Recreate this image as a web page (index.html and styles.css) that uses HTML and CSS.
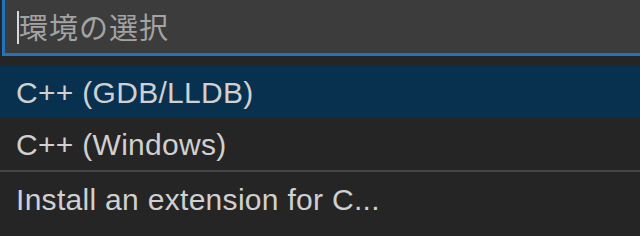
FILE: index.html
```html
<!DOCTYPE html>
<html lang="ja">
<head>
    <meta charset="UTF-8">
    <title>環境の選択</title>
    <link rel="stylesheet" href="styles.css">
</head>
<body>
    <div class="picker">
        <!-- 入力欄 -->
        <div class="input-wrap">
            <div class="input">
                <span class="caret"></span>
                <span class="placeholder">環境の選択</span>
            </div>
        </div>

        <!-- 候補リスト -->
        <ul class="list">
            <li class="item selected">C++ (GDB/LLDB)</li>
            <li class="item">C++ (Windows)</li>
            <li class="item separated">Install an extension for C...</li>
        </ul>
    </div>
</body>
</html>
```

FILE: styles.css
```css
body {
    margin: 0;
    background-color: #252526;
    font-family: "Liberation Sans", Arial, sans-serif;
    overflow: hidden;
}
.picker {
    width: 640px;
    height: 236px;
    overflow: hidden;
}
.input-wrap {
    padding-left: 2px;
}
.input {
    display: flex;
    align-items: center;
    height: 53px;
    padding-left: 12px;
    background-color: #3c3c3c;
    border-left: 3px solid #1f74bd;
    border-bottom: 3px solid #1f74bd;
}
.caret {
    width: 2px;
    height: 33px;
    margin-top: 1px;
    background-color: #d8d8d8;
}
.placeholder {
    font-family: "Noto Sans CJK JP", sans-serif;
    font-size: 29px;
    color: #a3a3a3;
    letter-spacing: 1px;
    margin-top: -1px;
}
.list {
    list-style: none;
    margin: 0;
    padding: 10px 0 0;
}
.item {
    height: 52px;
    line-height: 54px;
    padding-left: 16px;
    font-size: 30px;
    letter-spacing: 0.3px;
    color: #d0d0d0;
    white-space: nowrap;
}
.item.selected {
    background-color: #07314f;
}
.item.separated {
    border-top: 2px solid #45454a;
    line-height: 56px;
}
```
